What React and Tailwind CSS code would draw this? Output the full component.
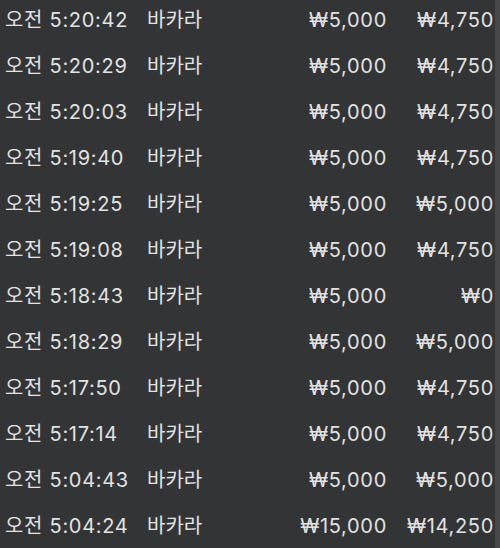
const rows = [
  { time: "오전 5:20:42", bet: "₩5,000", win: "₩4,750" },
  { time: "오전 5:20:29", bet: "₩5,000", win: "₩4,750" },
  { time: "오전 5:20:03", bet: "₩5,000", win: "₩4,750" },
  { time: "오전 5:19:40", bet: "₩5,000", win: "₩4,750" },
  { time: "오전 5:19:25", bet: "₩5,000", win: "₩5,000" },
  { time: "오전 5:19:08", bet: "₩5,000", win: "₩4,750" },
  { time: "오전 5:18:43", bet: "₩5,000", win: "₩0" },
  { time: "오전 5:18:29", bet: "₩5,000", win: "₩5,000" },
  { time: "오전 5:17:50", bet: "₩5,000", win: "₩4,750" },
  { time: "오전 5:17:14", bet: "₩5,000", win: "₩4,750" },
  { time: "오전 5:04:43", bet: "₩5,000", win: "₩5,000" },
  { time: "오전 5:04:24", bet: "₩15,000", win: "₩14,250" }
];

function App() {
  return (
    <div
      className="flex h-[548px] w-[500px] overflow-hidden bg-[#333436] text-[#e2e2e2]"
      style={{ fontFamily: 'Inter, "Noto Sans CJK KR", sans-serif' }}
    >
      <div className="-mt-[3px] flex flex-1 flex-col">
        {rows.map((row) => (
          <div key={row.time} className="flex h-[46px] shrink-0 items-center text-[20px] leading-none">
            <span className="w-[147px] shrink-0 pl-[5px] tracking-[0.035em]">{row.time}</span>
            <span className="w-[80px] shrink-0">바카라</span>
            <span className="w-[160px] shrink-0 text-right tracking-[0.035em]">{row.bet}</span>
            <span className="w-[107px] shrink-0 text-right tracking-[0.035em]">{row.win}</span>
          </div>
        ))}
      </div>
      <div className="w-[5px] shrink-0 bg-[#48484a]" />
    </div>
  );
}

export default App;
